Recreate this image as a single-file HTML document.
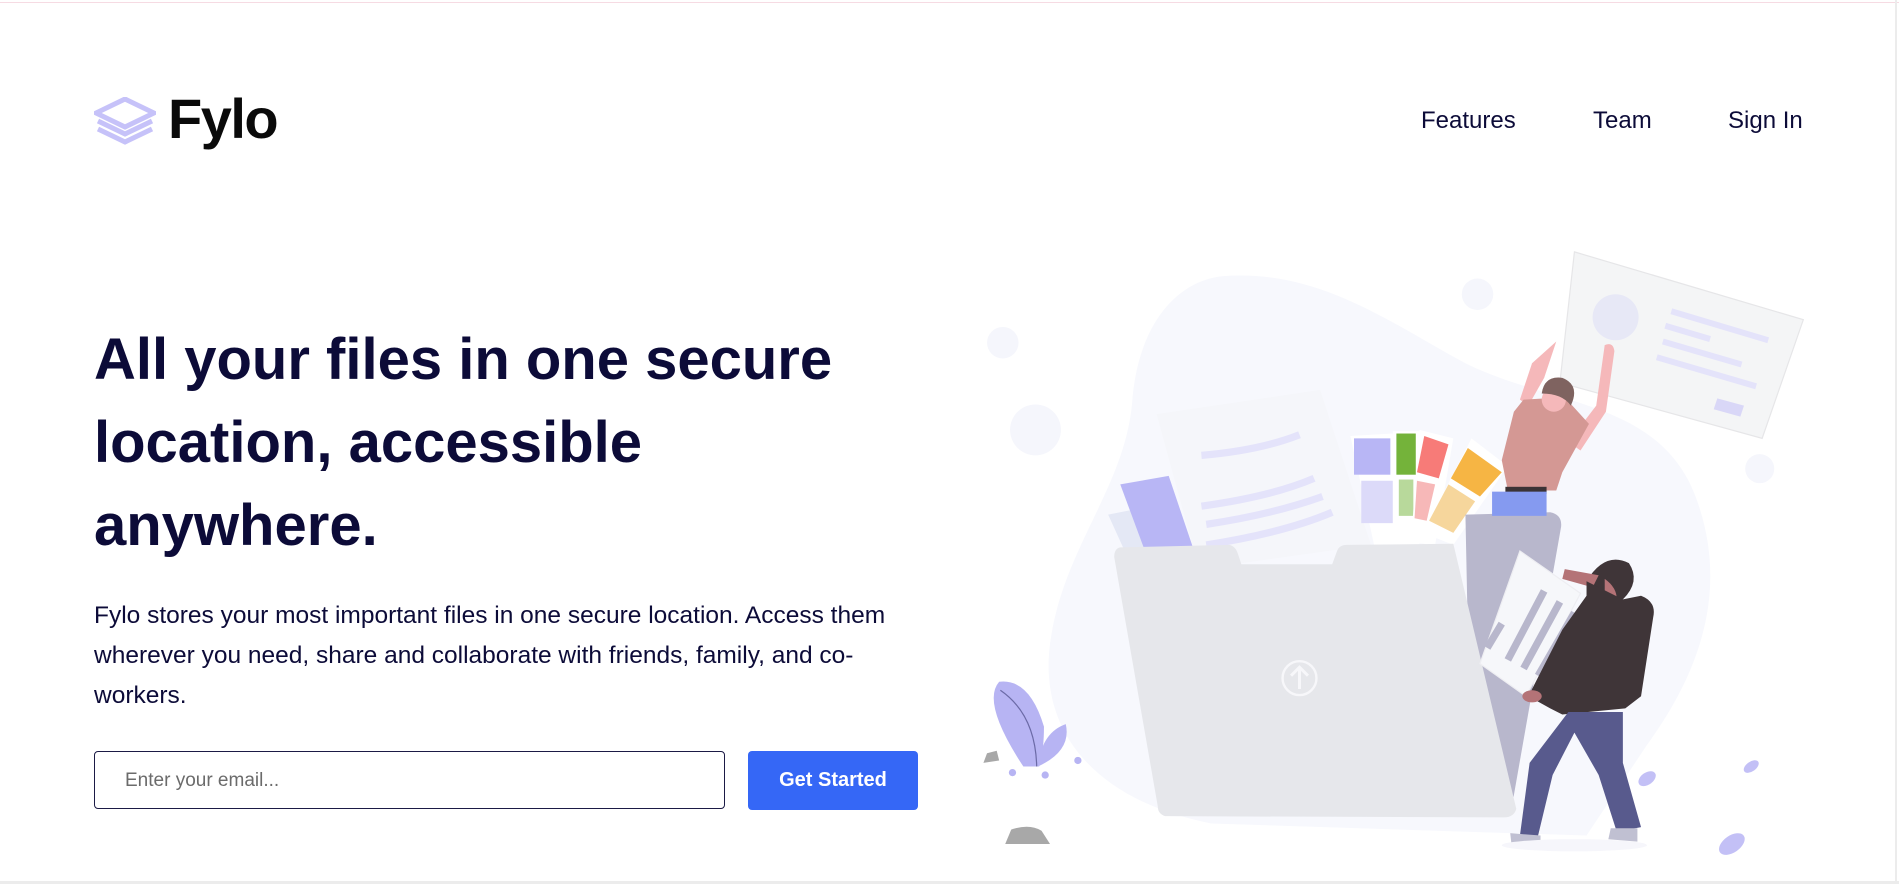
<!DOCTYPE html>
<html><head><meta charset="utf-8">
<style>
html,body{margin:0;padding:0;background:#fff;}
body{width:1899px;height:884px;position:relative;overflow:hidden;font-family:"Liberation Sans",sans-serif;color:#0c0b38;}
.topline{position:absolute;left:0;top:2px;width:1899px;height:1px;background:#f6dbe3;}
.botline{position:absolute;left:0;top:881px;width:1899px;height:3px;background:#ececec;}
.rightline{position:absolute;left:1895px;top:0;width:2px;height:884px;background:#ececec;}
.logo{position:absolute;left:94px;top:97px;}
.brand{position:absolute;left:168px;top:86px;font-size:56px;font-weight:bold;color:#0a0a0a;letter-spacing:-1.5px;}
.nav{position:absolute;top:107px;font-size:24px;color:#0c0b38;}
h1{position:absolute;left:94px;top:318px;margin:0;font-size:58px;line-height:83px;font-weight:bold;color:#0c0b38;white-space:nowrap;letter-spacing:0;}
p{position:absolute;left:94px;top:596px;margin:0;font-size:24.5px;line-height:40px;white-space:nowrap;color:#0c0b38;}
.input{position:absolute;left:94px;top:751px;width:631px;height:58px;border:1px solid #1b1a45;border-radius:4px;box-sizing:border-box;}
.input span{position:absolute;left:30px;top:18px;font-size:19px;color:#6b6b6b;}
.btn{position:absolute;left:748px;top:751px;width:170px;height:59px;background:#3567f6;border-radius:4px;color:#fff;font-weight:bold;font-size:20px;text-align:center;line-height:59px;}
svg.ill{position:absolute;left:0;top:0;}
</style></head><body>
<div class="topline"></div>
<svg class="logo" width="62" height="48" viewBox="0 0 62 48">
<path d="M31 2 L60 16 L31 30 L2 16 Z" fill="none" stroke="#c6c2f9" stroke-width="5"/>
<path d="M4 24 L31 37 L58 24" fill="none" stroke="#c6c2f9" stroke-width="5"/>
<path d="M4 32 L31 45 L58 32" fill="none" stroke="#c6c2f9" stroke-width="5"/>
</svg>
<div class="brand">Fylo</div>
<div class="nav" style="left:1421px">Features</div>
<div class="nav" style="left:1593px">Team</div>
<div class="nav" style="left:1728px">Sign In</div>
<h1>All your files in one secure<br>location, accessible<br>anywhere.</h1>
<p>Fylo stores your most important files in one secure location. Access them<br>wherever you need, share and collaborate with friends, family, and co-<br>workers.</p>
<div class="input"><span>Enter your email...</span></div>
<div class="btn">Get Started</div>

<svg class="ill" width="1899" height="884" viewBox="0 0 1568 730" preserveAspectRatio="none">
<path d="M1010 228 C1090 222 1150 268 1210 300 C1280 335 1370 330 1400 410 C1430 490 1400 560 1360 615 L1310 690 L1000 680 C900 660 855 600 868 525 C880 450 930 400 935 330 C940 270 970 232 1010 228 Z" fill="#f7f8fd"/>
<circle cx="828" cy="283" r="13" fill="#f5f6fc"/>
<circle cx="855" cy="355" r="21" fill="#f5f6fc"/>
<circle cx="1220" cy="243" r="13" fill="#f5f6fc"/>
<circle cx="1453" cy="387" r="12" fill="#f5f6fc"/>
<polygon points="1300,208 1489,264 1455,362 1288,316" fill="#f4f5f6" stroke="#e6e6e8" stroke-width="1"/>
<circle cx="1334" cy="262" r="19" fill="#e7e8f6"/>
<g stroke="#e4e3fa" stroke-width="5"><line x1="1380" y1="257" x2="1460" y2="281"/><line x1="1375" y1="269" x2="1412" y2="280"/><line x1="1373" y1="282" x2="1438" y2="301"/><line x1="1368" y1="295" x2="1450" y2="319"/></g>
<polygon points="1418,329 1440,335 1437,344 1415,338" fill="#d9d7f7"/>
<polygon points="915,425 940,420 960,455 930,458" fill="#e4e8f5"/>
<polygon points="925,400 965,393 987,458 948,462" fill="#b8b6f5"/>
<polygon points="955,342 1090,322 1132,450 990,470" fill="#f5f6fa"/>
<g stroke="#e4e3fa" stroke-width="6" fill="none"><path d="M992 376 Q1040 372 1073 359"/><path d="M992 418 Q1050 410 1085 395"/><path d="M996 433 Q1050 425 1092 410"/><path d="M996 450 Q1060 440 1100 423"/></g>
<polygon points="1115,360 1150,358 1160,450 1135,452" fill="#fff"/>
<rect x="1118" y="362" width="30" height="30" fill="#b8b6f5"/>
<rect x="1124" y="397" width="26" height="35" fill="#dcdaf9"/>
<polygon points="1150,356 1172,356 1172,450 1155,450" fill="#fff"/>
<rect x="1153" y="358" width="16" height="34" fill="#74b33a"/>
<rect x="1155" y="396" width="12" height="30" fill="#b8d99b"/>
<polygon points="1172,355 1200,362 1185,450 1165,448" fill="#fff"/>
<polygon points="1176,360 1196,367 1188,395 1170,390" fill="#f77b78"/>
<polygon points="1170,397 1185,400 1178,430 1168,428" fill="#f7b8b8"/>
<polygon points="1215,362 1245,385 1200,450 1175,440" fill="#fff"/>
<polygon points="1212,370 1240,390 1222,410 1198,395" fill="#f6b544"/>
<polygon points="1196,400 1218,414 1200,440 1180,430" fill="#f6d69c"/>
<path d="M1210 425 L1280 423 Q1290 425 1289 435 L1248 668 L1215 670 Z" fill="#b8b7cc"/>
<path d="M925 452 L1015 450 Q1020 451 1022 457 L1025 466 L1100 466 L1104 455 Q1106 450 1112 450 L1200 449 L1252 668 Q1250 675 1242 675 L962 674 Q956 672 956 666 L920 460 Q920 453 925 452 Z" fill="#e6e7eb"/>
<circle cx="1073" cy="560" r="14" fill="none" stroke="#f7f7fa" stroke-width="2"/>
<path d="M1073 569 L1073 552 M1066 558 L1073 551 L1080 558" stroke="#f7f7fa" stroke-width="2.5" fill="none"/>
<path d="M1285 282 L1265 300 L1255 330 L1262 335 L1275 312 Z" fill="#f5b8ba"/>
<path d="M1325 285 Q1332 282 1333 290 L1326 340 L1305 372 L1295 365 L1318 335 Z" fill="#f5b8ba"/>
<path d="M1258 330 L1292 328 L1312 350 L1290 390 L1285 405 L1245 405 L1240 380 L1250 340 Z" fill="#d49894"/>
<circle cx="1283" cy="330" r="10" fill="#f5b8ba"/>
<path d="M1273 325 Q1275 310 1290 312 Q1305 318 1297 335 Q1290 325 1273 325 Z" fill="#7f6360"/>
<rect x="1243" y="402" width="34" height="6" fill="#3b3336"/>
<rect x="1232" y="406" width="45" height="20" fill="#859af0"/>
<polygon points="1255,455 1305,490 1260,575 1222,548" fill="#f6f7fa" stroke="#eeeef2"/>
<g stroke="#b8b7cc" stroke-width="6"><line x1="1275" y1="488" x2="1245" y2="545"/><line x1="1288" y1="497" x2="1258" y2="552"/><line x1="1300" y1="506" x2="1270" y2="558"/><line x1="1240" y1="515" x2="1228" y2="535"/></g>
<path d="M1310 480 Q1325 455 1345 465 Q1355 480 1340 495 L1325 498 Z" fill="#3f3538"/>
<path d="M1325 478 Q1335 485 1335 495 L1325 500 Z" fill="#b47377"/>
<path d="M1292 470 L1320 475 L1315 485 L1290 478 Z" fill="#b47377"/>
<path d="M1310 480 L1340 495 L1355 492 Q1368 497 1365 510 L1355 575 L1342 585 L1290 590 L1280 585 L1262 575 L1290 520 L1310 492 Z" fill="#3f3538"/>
<ellipse cx="1265" cy="575" rx="8" ry="5" fill="#b47377"/>
<path d="M1295 588 L1340 588 L1340 630 L1355 683 L1335 687 L1320 640 L1300 605 L1282 640 L1270 690 L1255 690 L1263 630 Z" fill="#585a8d"/>
<path d="M1247 688 L1272 690 L1272 698 L1248 697 Z" fill="#c0c0d2"/>
<path d="M1330 684 L1352 684 L1352 695 L1328 693 Z" fill="#c0c0d2"/>
<ellipse cx="1300" cy="698" rx="60" ry="5" fill="#f6f6fb"/>
<path d="M845 633 Q810 580 825 563 Q850 560 862 600 Q862 620 858 633 Z" fill="#b7b4f3"/>
<path d="M857 633 Q860 605 880 598 Q885 620 857 633 Z" fill="#b7b4f3"/>
<path d="M855 633 Q840 610 840 602 Q855 610 858 633 Z" fill="#b7b4f3"/>
<path d="M826 570 Q855 590 856 633" stroke="#6b6aa6" stroke-width="1" fill="none"/>
<circle cx="836" cy="638" r="3" fill="#b7b4f3"/><circle cx="863" cy="640" r="3" fill="#b7b4f3"/><circle cx="890" cy="628" r="3" fill="#b7b4f3"/>
<path d="M812 630 L825 628 L823 620 L815 622 Z" fill="#a8a8a8"/>
<path d="M830 697 L835 685 Q850 680 860 686 L867 697 Z" fill="#a8a8a8"/>
<ellipse cx="1360" cy="643" rx="8" ry="5" fill="#c3c0f6" transform="rotate(-35 1360 643)"/>
<ellipse cx="1446" cy="633" rx="7" ry="4" fill="#c3c0f6" transform="rotate(-35 1446 633)"/>
<ellipse cx="1430" cy="697" rx="12" ry="7" fill="#c3c0f6" transform="rotate(-35 1430 697)"/>
</svg>
<div class="botline"></div>
<div class="rightline"></div>
</body></html>
